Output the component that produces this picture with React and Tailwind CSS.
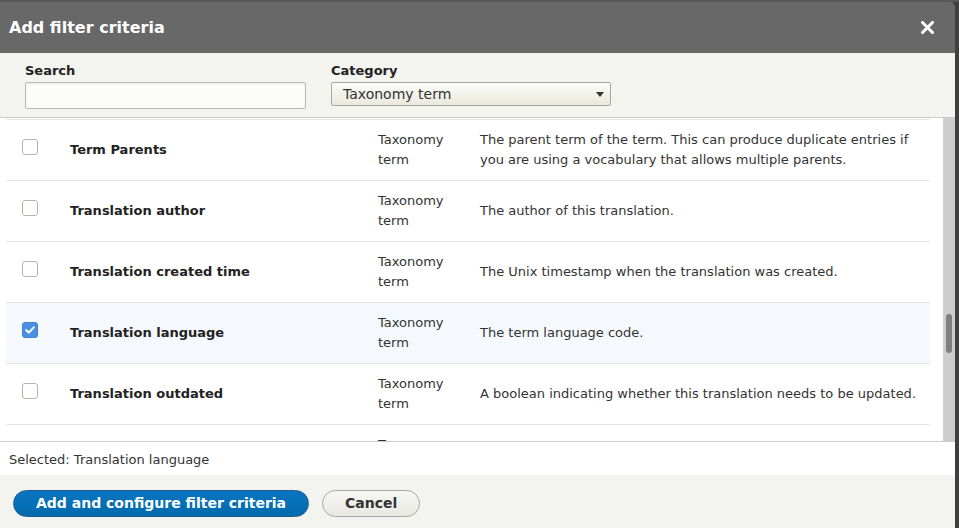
const rows = [
  {
    title: 'Term Parents',
    category: 'Taxonomy term',
    desc: 'The parent term of the term. This can produce duplicate entries if you are using a vocabulary that allows multiple parents.',
  },
  { title: 'Translation author', category: 'Taxonomy term', desc: 'The author of this translation.' },
  { title: 'Translation created time', category: 'Taxonomy term', desc: 'The Unix timestamp when the translation was created.' },
  { title: 'Translation language', category: 'Taxonomy term', desc: 'The term language code.', checked: true },
  { title: 'Translation outdated', category: 'Taxonomy term', desc: 'A boolean indicating whether this translation needs to be updated.' },
  { title: 'Translation source', category: 'Taxonomy term', desc: 'The source language from which this translation was created.' },
];

function Checkbox({ checked }) {
  if (checked) {
    return (
      <span className="w-4 h-4 rounded-[3px] bg-[#4b8fe3] border border-[#3f82d6] flex items-center justify-center mb-[6px]">
        <svg width="10" height="8" viewBox="0 0 10 8" fill="none">
          <path d="M1.2 4.2 L3.8 6.6 L8.8 1.4" stroke="white" strokeWidth="2" strokeLinecap="round" strokeLinejoin="round" />
        </svg>
      </span>
    );
  }
  return <span className="w-4 h-4 rounded-[3px] bg-white border border-[#b8b4ad] mb-[6px]" />;
}

function Row({ row }) {
  return (
    <div
      className={
        'grid grid-cols-[64px_308px_102px_1fr] items-center h-[61px] shrink-0 border-b border-[#e6e4df] ' +
        (row.checked ? 'bg-[#f5f9fe]' : 'bg-white')
      }
    >
      <div className="pl-4 flex items-center">
        <Checkbox checked={row.checked} />
      </div>
      <div className="font-bold text-[13px] text-[#222]">{row.title}</div>
      <div className="text-[13px] leading-5 text-[#333] pr-[10px]">{row.category}</div>
      <div className="text-[13px] leading-5 text-[#333] pr-[10px]">{row.desc}</div>
    </div>
  );
}

export default function App() {
  return (
    <div className="w-[959px] h-[528px] bg-[#3f3f3f] overflow-hidden font-['DejaVu_Sans',sans-serif]">
      <div className="h-[2px] bg-[#585858]" />
      <div className="w-[955px] h-[526px] flex flex-col rounded-tr-[5px] overflow-hidden">
        {/* Title bar */}
        <div className="h-[51px] shrink-0 bg-[#686868] flex items-center justify-between pl-[9px] pr-[21px]">
          <span className="text-white font-bold text-[16px] leading-5">Add filter criteria</span>
          <svg width="13" height="13" viewBox="0 0 13 13">
            <path d="M1.5 1.5 L11.5 11.5 M11.5 1.5 L1.5 11.5" stroke="white" strokeWidth="3" strokeLinecap="square" />
          </svg>
        </div>

        {/* Filters */}
        <div className="h-[65px] shrink-0 bg-[#f3f3ef] border-b border-[#cccccc] pt-[9px] pl-[25px] flex gap-[25px]">
          <div className="flex flex-col">
            <label className="text-[13px] font-bold leading-[18px] text-[#222] mb-[2px]">Search</label>
            <div className="w-[281px] h-[27px] bg-[#fcfcfa] border border-[#b8b8b8] rounded-[2px] shadow-[inset_0_1px_2px_rgba(0,0,0,0.08)]" />
          </div>
          <div className="flex flex-col">
            <label className="text-[13px] font-bold leading-[18px] text-[#222] mb-[2px]">Category</label>
            <div className="w-[280px] h-[24px] border border-[#a6a6a6] rounded-[2px] bg-gradient-to-b from-[#fcfcfa] to-[#e9e9dd] flex items-center justify-between pl-[11px] pr-[6px]">
              <span className="text-[14px] leading-5 text-[#333]">Taxonomy term</span>
              <svg width="8" height="5" viewBox="0 0 8 5">
                <path d="M0 0 H8 L4 5 Z" fill="#333" />
              </svg>
            </div>
          </div>
        </div>

        {/* Options list (scrolled) */}
        <div className="h-[323px] shrink-0 flex bg-white">
          <div className="flex-1 flex flex-col overflow-hidden pl-[6px] pr-[13px]">
            <div className="h-[2px] shrink-0 border-b border-[#e6e4df]" />
            {rows.map((row) => (
              <Row key={row.title} row={row} />
            ))}
          </div>
          <div className="w-[12px] bg-[#cdcdcd] flex justify-center">
            <div className="w-[6px] h-[39px] mt-[196px] rounded-full bg-[#7f7f7f]" />
          </div>
        </div>

        {/* Selected */}
        <div className="h-[34px] shrink-0 border-t border-[#cccccc] bg-white flex items-center pl-[9px] pt-[2px]">
          <span className="text-[13px] leading-5 text-[#333]">Selected: Translation language</span>
        </div>

        {/* Buttons */}
        <div className="flex-1 bg-[#f3f3ef] flex items-start gap-[13px] pl-[13px] pt-[15px]">
          <button className="h-[27px] px-[22px] rounded-full border border-[#1e5c90] bg-gradient-to-b from-[#0a76c0] to-[#006aad] text-white font-bold text-[14px] leading-none pb-[1px]">
            Add and configure filter criteria
          </button>
          <button className="h-[27px] px-[22px] rounded-full border border-[#a6a6a6] bg-gradient-to-b from-[#f6f6f3] to-[#e8e8e3] text-[#333] font-bold text-[14px] leading-none pb-[1px]">
            Cancel
          </button>
        </div>
      </div>
    </div>
  );
}
